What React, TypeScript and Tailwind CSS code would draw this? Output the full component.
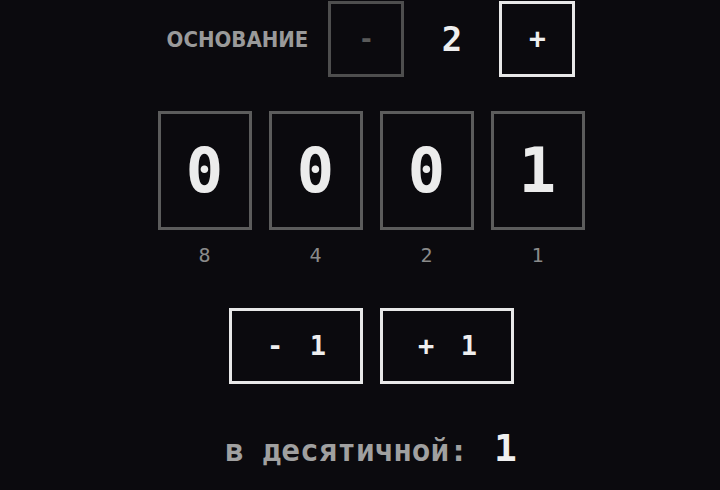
const mono = "font-['DejaVu_Sans_Mono',monospace]";

const DigitBox = ({ value }: { value: number }) => (
  <div className="w-[94px] h-[119px] border-[3px] border-[#5c5c5c] flex items-center justify-center">
    <span className={`${mono} text-[62px] font-bold text-[#ececec] leading-none`}>{value}</span>
  </div>
);

export default function App() {
  const bits = [0, 0, 0, 1];
  const weights = [8, 4, 2, 1];

  return (
    <div className="min-h-screen w-full bg-[#0b0a0e] flex flex-col items-center pl-[22px] pt-px">
      {/* base selector */}
      <div className="flex items-center h-[76px]">
        <span className="font-['DejaVu_Sans_Condensed',sans-serif] text-[22px] font-semibold text-[#9a9a9a] mr-[20px]">
          ОСНОВАНИЕ
        </span>
        <button className="w-[76px] h-[76px] border-[3px] border-[#4e4e4e] flex items-center justify-center">
          <span className={`${mono} text-[26px] font-bold text-[#5a5a5a]`}>-</span>
        </button>
        <span className={`${mono} w-[95px] text-center text-[34px] font-bold text-[#eeeeee]`}>2</span>
        <button className="w-[76px] h-[76px] border-[3px] border-[#e8e8e8] flex items-center justify-center">
          <span className={`${mono} text-[28px] font-bold text-[#eeeeee]`}>+</span>
        </button>
      </div>

      {/* digits */}
      <div className="flex gap-[17px] mt-[34px]">
        {bits.map((b, i) => (
          <div key={i} className="flex flex-col items-center">
            <DigitBox value={b} />
            <span className={`${mono} text-[20px] text-[#8a8a8a] mt-[13px] leading-6`}>{weights[i]}</span>
          </div>
        ))}
      </div>

      {/* step buttons */}
      <div className="flex gap-[17px] mt-[41px]">
        <button className="w-[134px] h-[76px] border-[3px] border-[#e8e8e8] flex items-center justify-center">
          <span className={`${mono} text-[27px] font-semibold text-[#eeeeee] whitespace-pre tracking-[-2px]`}>-  1</span>
        </button>
        <button className="w-[134px] h-[76px] border-[3px] border-[#e8e8e8] flex items-center justify-center">
          <span className={`${mono} text-[27px] font-semibold text-[#eeeeee] whitespace-pre tracking-[-2px]`}>+  1</span>
        </button>
      </div>

      {/* decimal */}
      <div className="flex items-baseline mt-[36px]">
        <span className={`${mono} text-[31px] font-semibold text-[#a0a0a0] whitespace-pre`}>в десятичной:</span>
        <span className={`${mono} text-[38px] font-bold text-[#f0f0f0] ml-[26px]`}>1</span>
      </div>
    </div>
  );
}
